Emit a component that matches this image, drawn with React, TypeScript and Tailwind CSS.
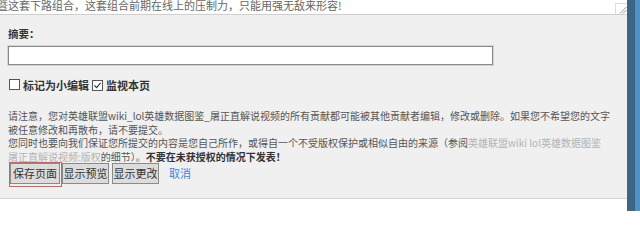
import React from "react";

const font = { fontFamily: '"Noto Sans CJK SC", "Noto Sans", sans-serif' };

function Box({ checked }: { checked?: boolean }) {
  return (
    <span className="inline-flex w-[11px] h-[11px] border border-[#555] bg-white items-center justify-center shrink-0">
      {checked && (
        <svg width="9" height="9" viewBox="0 0 9 9">
          <path d="M1.5 4.5 L3.6 6.6 L7.6 1.8" fill="none" stroke="#333" strokeWidth="1.1" />
        </svg>
      )}
    </span>
  );
}

export default function App() {
  return (
    <div className="flex w-[640px] h-[211px] overflow-hidden bg-white" style={font}>
      <div className="w-[627px] min-w-0 shrink-0 overflow-hidden flex flex-col">
        {/* textarea remainder */}
        <div className="flex h-[15px] bg-white border-b border-[#cfcfcf]">
          <div className="flex-1 min-w-0 overflow-hidden">
            <div className="mt-[-2px] ml-[-3px] whitespace-nowrap text-[11px] leading-[14px] text-[#666]">
              暨这套下路组合，这套组合前期在线上的压制力，只能用强无敌来形容!
            </div>
          </div>
          <div className="w-[12px] shrink-0 pt-[3px]">
            <div className="w-[12px] h-[11px] border-l border-t border-[#dcdcdc] bg-white flex items-end justify-end">
              <svg width="9" height="8" viewBox="0 0 9 8">
                <path d="M8.5 1 L2 7.5 M8.5 4 L5 7.5" stroke="#999" strokeWidth="1" fill="none" />
              </svg>
            </div>
          </div>
        </div>

        {/* edit options panel */}
        <div className="bg-[#f0f0f0] border-b border-[#d6d6d6] pl-2 pr-2 pt-[12px] pb-[11px]">
          <div className="text-[10.5px] leading-[14px] font-bold text-[#333]">摘要：</div>
          <div className="mt-[5px] w-[485px] h-[19px] bg-white border border-[#8a8a8a] shadow-[0_0_0_1px_#d4d4d4]" />

          <div className="mt-[14px] flex items-center h-[13px] text-[11px] font-bold text-[#333] leading-[13px]">
            <span className="ml-[1px]"><Box /></span>
            <span className="ml-[3px]">标记为小编辑</span>
            <span className="ml-[3px]"><Box checked /></span>
            <span className="ml-[3px]">监视本页</span>
          </div>

          <div className="mt-[17px] text-[10px] leading-[13.67px] text-[#555] whitespace-nowrap">
            请注意，您对英雄联盟wiki_lol英雄数据图鉴_屠正直解说视频的所有贡献都可能被其他贡献者编辑，修改或删除。如果您不希望您的文字
            <br />
            被任意修改和再散布，请不要提交。
            <br />
            您同时也要向我们保证您所提交的内容是您自己所作，或得自一个不受版权保护或相似自由的来源（参阅
            <span className="text-[#b4b4b4]">英雄联盟wiki lol英雄数据图鉴</span>
            <br />
            <span className="text-[#b4b4b4]">屠正直解说视频:版权</span>的细节）。
            <span className="font-bold text-[#333]">不要在未获授权的情况下发表！</span>
          </div>

          <div className="mt-[-2px] flex items-start text-[11px] text-[#333]">
            <span className="ml-[1px] border border-[#e05858] pr-[1px] pb-[2px]">
              <span className="flex w-[50px] h-[21px] items-center justify-center bg-[#dcdcdc] border border-[#8a8a8a]">
                保存页面
              </span>
            </span>
            <span className="mt-[1px] flex w-[47px] h-[21px] items-center justify-center bg-[#dcdcdc] border border-[#8a8a8a]">
              显示预览
            </span>
            <span className="ml-[3px] mt-[1px] flex w-[47px] h-[21px] items-center justify-center bg-[#dcdcdc] border border-[#8a8a8a]">
              显示更改
            </span>
            <span className="ml-[10px] mt-[1px] h-[21px] flex items-center text-[#3f86dc]">取消</span>
          </div>
        </div>
        <div className="flex-1 bg-white" />
      </div>
      <div className="w-[8px] shrink-0 bg-[#3d6584]" />
      <div className="w-[5px] shrink-0 bg-[#4d93c9]" />
    </div>
  );
}
